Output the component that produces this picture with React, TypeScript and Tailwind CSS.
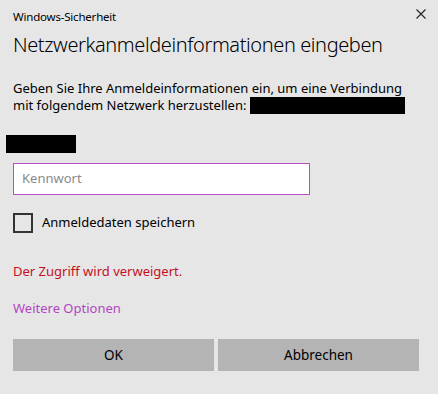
import React from "react";

export default function App() {
  return (
    <div
      className="w-[438px] h-[394px] bg-[#e6e6e6] text-black overflow-hidden relative"
      style={{ fontFamily: '"Noto Sans", "Open Sans", sans-serif' }}
    >
      <div className="flex items-center justify-between pl-[13px] pr-[12px] pt-[6px] h-[28px]">
        <span className="text-[11.5px] leading-[16px] tracking-[-0.2px]">Windows-Sicherheit</span>
        <svg width="10" height="10" viewBox="0 0 10 10" className="-mt-[6px]">
          <path d="M0.5 0.5 L9.5 9.5 M9.5 0.5 L0.5 9.5" stroke="#222" strokeWidth="1.1" />
        </svg>
      </div>
      <div className="px-[13px]">
        <div className="mt-[4px] text-[20px] leading-[26px] font-light tracking-[-0.4px]">
          Netzwerkanmeldeinformationen eingeben
        </div>
        <div className="mt-[22px] text-[13px] leading-[17px]">
          Geben Sie Ihre Anmeldeinformationen ein, um eine Verbindung
          <br />
          mit folgendem Netzwerk herzustellen:{" "}
          <span className="inline-block align-[-4px] w-[155px] h-[17px] bg-black" />
        </div>
        <div className="mt-[21px] -ml-[7px] w-[70px] h-[18px] bg-black" />
        <div className="mt-[10px] w-[297px] h-[32px] border border-[#b84ec0] bg-white flex items-center px-[8px]">
          <span className="text-[13px] text-[#8a8a8a]">Kennwort</span>
        </div>
        <div className="mt-[18px] flex items-center gap-[9px]">
          <div className="w-[20px] h-[20px] border-2 border-[#333]" />
          <span className="text-[13px]">Anmeldedaten speichern</span>
        </div>
        <div className="mt-[30px] text-[13px] leading-[17px] text-[#c50f1f]">
          Der Zugriff wird verweigert.
        </div>
        <div className="mt-[20px] text-[13px] leading-[17px] text-[#b146c2]">
          Weitere Optionen
        </div>
        <div className="mt-[22px] flex gap-[4px]">
          <div className="w-[201px] h-[32px] bg-[#b4b4b4] flex items-center justify-center text-[13.5px]">
            OK
          </div>
          <div className="w-[201px] h-[32px] bg-[#b4b4b4] flex items-center justify-center text-[13.5px]">
            Abbrechen
          </div>
        </div>
      </div>
    </div>
  );
}
